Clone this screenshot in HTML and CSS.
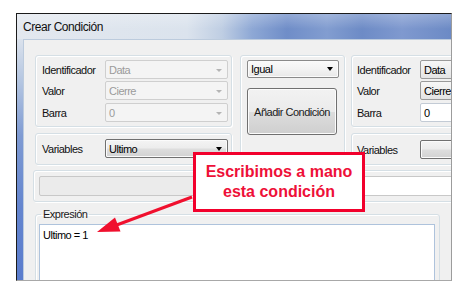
FILE: index.html
```html
<!DOCTYPE html>
<html lang="es">
<head>
<meta charset="utf-8">
<title>Crear Condición</title>
<link rel="stylesheet" href="styles.css">
</head>
<body>
<div class="window">
  <div class="titlebar"><span class="title">Crear Condición</span></div>
  <div class="wbody">
    <div class="frame-left"></div>
    <div class="client">
      <div class="top-row">
        <div class="col-left">
          <div class="group g-params">
            <div class="row"><span class="label">Identificador</span><div class="combo disabled"><span class="val">Data</span><i class="arrow"></i></div></div>
            <div class="row"><span class="label">Valor</span><div class="combo disabled"><span class="val">Cierre</span><i class="arrow"></i></div></div>
            <div class="row r3"><span class="label">Barra</span><div class="combo disabled"><span class="val">0</span><i class="arrow"></i></div></div>
          </div>
          <div class="group g-vars">
            <div class="row"><span class="label">Variables</span><div class="combo enabled"><span class="val">Ultimo</span><i class="arrow"></i></div></div>
          </div>
        </div>
        <div class="group col-mid">
          <div class="combo enabled igual"><span class="val">Igual</span><i class="arrow"></i></div>
          <div class="btn">Añadir Condición</div>
        </div>
        <div class="col-right">
          <div class="group g-params">
            <div class="row"><span class="label">Identificador</span><div class="combo right"><span class="val">Data</span></div></div>
            <div class="row"><span class="label">Valor</span><div class="combo right"><span class="val">Cierre</span></div></div>
            <div class="row r3"><span class="label">Barra</span><div class="combo textbox"><span class="val">0</span></div></div>
          </div>
          <div class="group g-vars">
            <div class="row"><span class="label">Variables</span><div class="combo enabled"></div></div>
          </div>
        </div>
      </div>
      <div class="group g-field">
        <div class="field f-off"></div>
        <div class="field f-on"></div>
      </div>
      <fieldset class="g-expr">
        <legend>Expresión</legend>
        <div class="textarea">Ultimo = 1</div>
      </fieldset>
    </div>
  </div>
</div>
<div class="callout">Escribimos a mano<br>esta condición</div>
<svg class="pointer" width="463" height="291" viewBox="0 0 463 291">
  <line x1="192" y1="197" x2="114" y2="226" stroke="#f0102e" stroke-width="3"/>
  <polygon points="97,232 115,217.5 120.5,231.5" fill="#f0102e"/>
</svg>
</body>
</html>
```
FILE: styles.css
```css
* { box-sizing: border-box; }
html, body { margin: 0; padding: 0; background: #ffffff; }
body {
  width: 463px;
  height: 291px;
  overflow: hidden;
  position: relative;
  font-family: "Liberation Sans", Arial, sans-serif;
  font-size: 11px;
  letter-spacing: -0.5px;
  color: #000;
}
.window {
  margin: 13px 0 0 16px;
  width: 436px;
  height: 268px;
  border-top: 1px solid #1b1b1b;
  border-left: 1px solid #1b1b1b;
  border-right: 1px solid #9c9c9c;
  border-bottom: 1px solid #a8a8a8;
  display: flex;
  flex-direction: column;
  overflow: hidden;
}
.titlebar {
  height: 25px;
  flex: none;
  padding-left: 6px;
  background:
    linear-gradient(to bottom, rgba(255,255,255,0.25), rgba(255,255,255,0) 60%),
    linear-gradient(to right, #e3e8ef 0px, #dbe3ed 170px, #bfcee3 205px, #8ea8d5 235px, #6f8dc8 270px, #829dd0 310px, #6d8bc6 345px, #7f99cf 385px, #6c8ac5 434px);
  display: flex;
  align-items: center;
}
.title {
  font-size: 12px;
  letter-spacing: -0.45px;
  color: #101010;
  line-height: 16px;
}
.wbody {
  flex: 1;
  display: flex;
  min-height: 0;
}
.frame-left {
  width: 6px;
  flex: none;
  background: linear-gradient(to bottom, #dbe2ec 0%, #b3c5e1 18%, #7f9bd3 40%, #6485cf 70%, #5a7ccd 100%);
}
.client {
  flex: 1;
  background: #f0f0f0;
  border-top: 1px solid #bccbdd;
  border-left: 1px solid #bccbdd;
  padding: 15px 0 0 11px;
  overflow: hidden;
  position: relative;
}
.top-row {
  display: flex;
  align-items: flex-start;
  width: 600px;
}
.group {
  border: 1px solid #d5dfe5;
  border-radius: 3px;
  box-shadow: inset 1px 1px 0 #ffffff, 1px 1px 0 #ffffff;
}
.col-left {
  width: 197px;
  flex: none;
  display: flex;
  flex-direction: column;
  gap: 6px;
}
.g-params {
  height: 72px;
  padding: 4px 4px 0 6px;
  display: flex;
  flex-direction: column;
  gap: 2px;
}
.g-params .r3 { margin-top: 1px; }
.g-vars {
  height: 32px;
  padding: 5px 4px 0 6px;
}
.row {
  display: flex;
  align-items: center;
  height: 19px;
}
.label {
  width: 63px;
  flex: none;
  white-space: nowrap;
  color: #111;
}
.combo {
  height: 19px;
  width: 123px;
  flex: none;
  border: 1px solid #707070;
  border-radius: 2px;
  display: flex;
  align-items: center;
  padding-left: 3px;
  position: relative;
  white-space: nowrap;
  overflow: hidden;
}
.combo.disabled {
  border-color: #cfcfcf;
  background: #f4f4f4;
  color: #9b9b9b;
}
.combo.enabled {
  background: linear-gradient(to bottom, #f4f4f4 0%, #ececec 48%, #dedede 52%, #d2d2d2 100%);
  box-shadow: inset 0 0 0 1px #fbfbfb;
}
.arrow {
  position: absolute;
  right: 5px;
  top: 50%;
  margin-top: -2px;
  width: 0;
  height: 0;
  border-left: 3.5px solid transparent;
  border-right: 3.5px solid transparent;
  border-top: 4px solid #000;
}
.combo.disabled .arrow {
  border-left-width: 3px;
  border-right-width: 3px;
  border-top: 3px solid #b4b4b4;
  margin-top: -1px;
}
.col-mid {
  margin-left: 8px;
  width: 105px;
  height: 110px;
  flex: none;
  padding: 4px 0 0 6px;
}
.combo.igual {
  width: 92px;
  height: 18px;
  background: linear-gradient(to bottom, #fafafa 0%, #f3f3f3 50%, #e8e8e8 100%);
  border-color: #8a8a8a;
}
.btn {
  margin-top: 10px;
  width: 90px;
  height: 47px;
  border: 1px solid #707070;
  border-radius: 3px;
  background: linear-gradient(to bottom, #f2f2f2 0%, #ebebeb 50%, #dddddd 51%, #cfcfcf 100%);
  box-shadow: inset 0 0 0 1px #fcfcfc;
  display: flex;
  align-items: center;
  justify-content: center;
  color: #1a1a1a;
  white-space: nowrap;
}
.col-right {
  margin-left: 6px;
  width: 160px;
  flex: none;
  display: flex;
  flex-direction: column;
  gap: 6px;
}
.col-right .g-params { padding-left: 5px; }
.col-right .g-vars { padding-left: 5px; padding-top: 6px; }
.col-right .combo { width: 80px; }
.combo.right {
  border-color: #9a9a9a;
  background: linear-gradient(to bottom, #f7f7f7 0%, #eeeeee 50%, #e4e4e4 100%);
}
.combo.textbox {
  background: #ffffff;
  border-color: #c3cbd5;
}
.g-field {
  margin: 5px 0 0 -2px;
  width: 700px;
  height: 32px;
  padding: 5px 0 0 5px;
  display: flex;
}
.field {
  height: 20px;
  border: 1px solid #c8c8c8;
  border-radius: 2px;
}
.f-off {
  width: 250px;
  background: #ebebeb;
}
.f-on {
  width: 300px;
  background: #ffffff;
  border-radius: 0;
}
.g-expr {
  margin: 5px 0 0 0;
  padding: 0 0 0 3px;
  width: 405px;
  height: 90px;
  border: 1px solid #d5dfe5;
  border-radius: 3px;
  box-shadow: inset 1px 1px 0 #ffffff;
}
.g-expr legend {
  margin-left: 2px;
  padding: 0 2px;
  font-size: 11px;
  line-height: 14px;
  color: #1a1a1a;
}
.textarea {
  margin-top: 3px;
  width: 396px;
  height: 80px;
  background: #ffffff;
  border: 1px solid #aec3dc;
  padding: 3px 0 0 3px;
  line-height: 14px;
}
.callout {
  position: absolute;
  left: 193px;
  top: 152px;
  width: 172px;
  height: 60px;
  border: 3px solid #f2002c;
  background: #ffffff;
  display: flex;
  align-items: center;
  justify-content: center;
  text-align: center;
  font-family: "Liberation Sans", Arial, sans-serif;
  font-weight: bold;
  font-size: 16px;
  letter-spacing: 0;
  line-height: 20px;
  color: #ee1038;
  z-index: 2;
}
.pointer {
  position: absolute;
  left: 0;
  top: 0;
  z-index: 3;
  pointer-events: none;
}
```
